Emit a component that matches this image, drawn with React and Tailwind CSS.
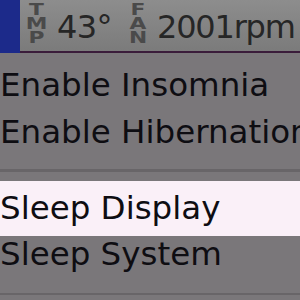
export default function App() {
  const f = { fontFamily: '"DejaVu Sans", Verdana, sans-serif' };
  const tiny = "flex flex-col items-center text-[15px] leading-[14px] font-bold text-[#4a4a4a] scale-x-[1.45]";
  return (
    <div className="w-[300px] h-[300px] overflow-hidden bg-[#7a777a] flex flex-col" style={f}>
      <div className="h-[53px] flex shrink-0">
        <div className="w-[20px] h-full bg-[#1c2a8a]" />
        <div className="flex-1 flex flex-col">
          <div className="h-[51px] bg-gradient-to-b from-[#8d8d8d] to-[#7b7b7b] flex items-start pl-[8px] whitespace-nowrap overflow-hidden">
            <div className={"w-[17px] shrink-0 mt-[3px] " + tiny}>
              <span>T</span><span>M</span><span>P</span>
            </div>
            <span className="w-[85px] shrink-0 pl-[12px] pt-[4px] text-[32px] tracking-[-0.6px] leading-[47px] text-[#262626]">43°</span>
            <div className={"w-[16px] shrink-0 mt-[3px] " + tiny}>
              <span>F</span><span>A</span><span>N</span>
            </div>
            <span className="ml-[11px] shrink-0 pt-[4px] text-[32px] tracking-[-1.2px] leading-[47px] text-[#262626]">2001rpm</span>
          </div>
          <div className="h-[2px] bg-[#3a1c3a]" />
        </div>
      </div>
      <div className="flex flex-col whitespace-nowrap text-[#0e0d12] text-[32.5px]">
        <div className="h-[47px] mt-[9px] leading-[47px]">Enable Insomnia</div>
        <div className="h-[47px] leading-[47px]">Enable Hibernation</div>
        <div className="h-[13px]" />
        <div className="h-[3px] bg-[#686568]" />
        <div className="h-[9px]" />
        <div className="h-[55px] leading-[55px] bg-[#faf0f8]">Sleep Display</div>
        <div className="h-[36px] leading-[36px]">Sleep System</div>
        <div className="h-[21px]" />
        <div className="h-[2px] bg-[#686568]" />
      </div>
    </div>
  );
}
